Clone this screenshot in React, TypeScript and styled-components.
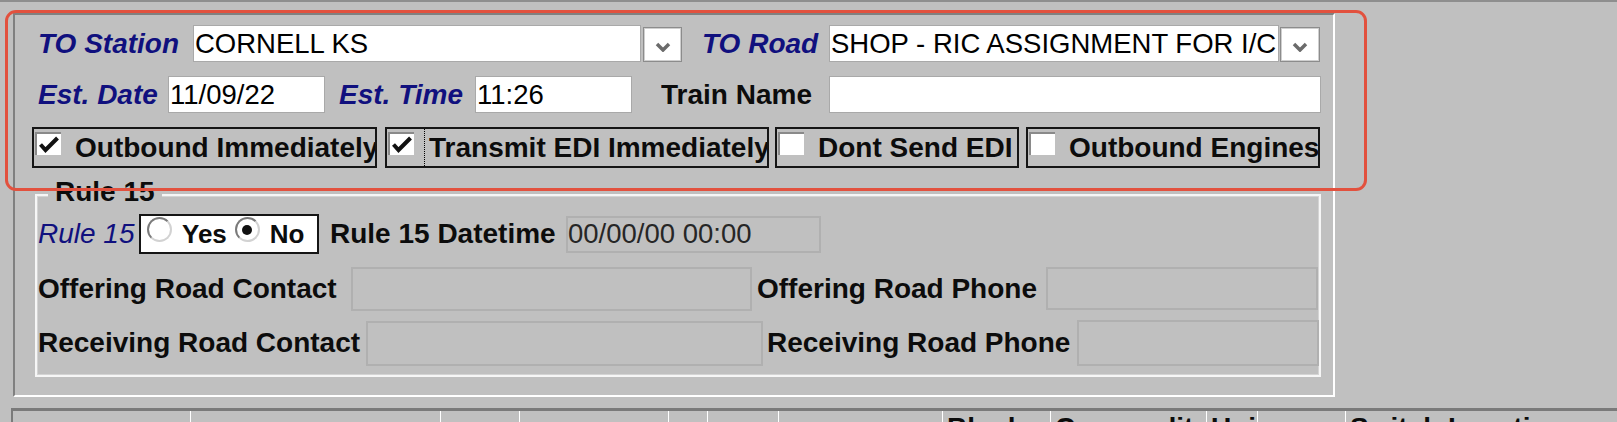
import React from 'react'
import styled, { createGlobalStyle } from 'styled-components'

const GlobalStyle = createGlobalStyle`
	html, body {
		margin: 0;
		padding: 0;
		background: #c0c0c0;
	}

	body {
		font-family: 'Liberation Sans', Arial, sans-serif;
		color: #000;
	}
`

const Page = styled.div`
	position: relative;
	height: 422px;
	overflow: hidden;
	box-sizing: border-box;
	border-top: 2px solid #8e8e8e;
	background: #c0c0c0;
	display: flex;
	flex-direction: column;
	align-items: flex-start;
`

const Panel = styled.div`
	margin: 11px 0 0 13px;
	width: 1322px;
	height: 384px;
	box-sizing: border-box;
	border: 2px solid;
	border-color: #808080 #ffffff #ffffff #808080;
	padding-top: 10px;
	display: flex;
	flex-direction: column;
	flex-shrink: 0;
`

const Row = styled.div<{ $h: number; $mt?: number; $pl?: number }>`
	display: flex;
	align-items: center;
	height: ${({ $h }) => $h}px;
	margin-top: ${({ $mt }) => $mt ?? 0}px;
	padding-left: ${({ $pl }) => $pl ?? 0}px;
	flex-shrink: 0;
`

const Label = styled.span<{ $w?: number; $ml?: number; $italic?: boolean; $plain?: boolean }>`
	flex-shrink: 0;
	width: ${({ $w }) => ($w ? `${$w}px` : 'auto')};
	margin-left: ${({ $ml }) => $ml ?? 0}px;
	font-size: 28px;
	font-weight: ${({ $plain }) => ($plain ? 'normal' : 'bold')};
	font-style: ${({ $italic }) => ($italic ? 'italic' : 'normal')};
	color: ${({ $italic }) => ($italic ? '#10107e' : '#0c0c0c')};
	white-space: nowrap;
	overflow: hidden;
`

const TextInput = styled.input<{ $w: number; $h?: number; $ml?: number }>`
	flex-shrink: 0;
	width: ${({ $w }) => $w}px;
	height: ${({ $h }) => $h ?? 37}px;
	margin: 0 0 0 ${({ $ml }) => $ml ?? 0}px;
	box-sizing: border-box;
	border: 1px solid #a9a9a9;
	padding: 0 0 0 1px;
	background: #ffffff;
	font-family: inherit;
	font-size: 27.5px;
	color: #000;
	outline: none;

	&:disabled {
		background: #c0c0c0;
		border: 2px solid #b0b0b0;
		color: #262626;
		padding-left: 0;
	}
`

const DropButton = styled.span<{ $w: number; $ml: number }>`
	flex-shrink: 0;
	width: ${({ $w }) => $w}px;
	height: 35px;
	margin-left: ${({ $ml }) => $ml}px;
	margin-top: 2px;
	box-sizing: border-box;
	border: 1px solid #8c8c8c;
	box-shadow: inset 0 0 0 1px #cfcfcf;
	background: #ffffff;
	display: flex;
	align-items: center;
	justify-content: center;

	svg {
		margin-top: 4px;
	}
`

const CheckGroup = styled.div<{ $w: number; $ml?: number }>`
	flex-shrink: 0;
	width: ${({ $w }) => $w}px;
	height: 41px;
	margin-left: ${({ $ml }) => $ml ?? 0}px;
	box-sizing: border-box;
	border: 2px solid #151515;
	display: flex;
	align-items: center;
	overflow: hidden;
`

const CheckBox = styled.span`
	flex-shrink: 0;
	align-self: flex-start;
	width: 26px;
	height: 23px;
	margin: 3px 0 0 1px;
	box-sizing: border-box;
	background: #ffffff;
	border-top: 2px solid #8a8a8a;
	border-left: 2px solid #8a8a8a;
	display: flex;
	align-items: center;
	justify-content: center;
`

const CheckText = styled.span<{ $focused?: boolean }>`
	flex-shrink: 0;
	margin-left: 14px;
	font-size: 28px;
	font-weight: bold;
	color: #0c0c0c;
	white-space: nowrap;

	${({ $focused }) =>
		$focused &&
		`
		flex: 1;
		align-self: stretch;
		display: flex;
		align-items: center;
		margin: -2px -2px -2px 10px;
		padding-left: 4px;
		border: 1px dotted #000;
		background: #c0c0c0;
		overflow: hidden;
	`}
`

const Fieldset = styled.fieldset`
	flex-shrink: 0;
	margin: 8px 0 0 20px;
	width: 1286px;
	box-sizing: border-box;
	border: 2px solid #f6f6f6;
	box-shadow: inset 1px 1px 0 #d4d4d4, inset -1px -1px 0 #d4d4d4;
	padding: 0 0 9px 1px;
	display: flex;
	flex-direction: column;
`

const Legend = styled.legend`
	margin-left: 10px;
	padding: 0 7px 6px;
	line-height: 32px;
	font-size: 28px;
	font-weight: bold;
	color: #0c0c0c;
	background: #c0c0c0;
`

const RadioBox = styled.div`
	flex-shrink: 0;
	width: 180px;
	height: 40px;
	box-sizing: border-box;
	border: 2px solid #151515;
	background: #ffffff;
	display: flex;
	align-items: center;
	padding-left: 6px;
`

const Radio = styled.span<{ $checked?: boolean }>`
	flex-shrink: 0;
	align-self: flex-start;
	width: 25px;
	height: 25px;
	margin-top: 1px;
	box-sizing: border-box;
	border-radius: 50%;
	border: 2px solid;
	border-color: #7a7a7a #d2d2d2 #d2d2d2 #7a7a7a;
	background: #ffffff;
	display: flex;
	align-items: center;
	justify-content: center;

	&::after {
		content: '';
		display: ${({ $checked }) => ($checked ? 'block' : 'none')};
		width: 10px;
		height: 10px;
		border-radius: 50%;
		background: #111;
	}
`

const RadioText = styled.span<{ $mr?: number }>`
	margin: 0 ${({ $mr }) => $mr ?? 0}px 0 10px;
	font-size: 26px;
	font-weight: bold;
	color: #0c0c0c;
`

const GridHead = styled.div`
	flex-shrink: 0;
	margin: 11px 0 0 11px;
	width: calc(100% - 11px);
	height: 40px;
	box-sizing: border-box;
	border-top: 3px solid #7a7a7a;
	border-left: 2px solid #7a7a7a;
	display: flex;
`

const HeadCell = styled.div<{ $w?: number; $first?: boolean }>`
	flex: ${({ $w }) => ($w ? `0 0 ${$w}px` : '1')};
	box-sizing: border-box;
	border-left: ${({ $first }) => ($first ? 'none' : '1px solid #ffffff')};
	padding: 1px 0 0 4px;
	font-size: 28px;
	font-weight: bold;
	color: #0c0c0c;
	white-space: nowrap;
	overflow: hidden;
`

const Highlight = styled.div`
	position: absolute;
	left: 5px;
	top: 8px;
	width: 1362px;
	height: 181px;
	box-sizing: border-box;
	border: 3.5px solid #e2513e;
	border-radius: 11px;
	pointer-events: none;
`

const Chevron = () => (
	<svg width="16" height="10" viewBox="0 0 16 10">
		<polyline points="2,2 8,8 14,2" fill="none" stroke="#6b6b6b" strokeWidth="3.5" />
	</svg>
)

const Check = () => (
	<svg width="22" height="19" viewBox="0 0 22 19">
		<path d="M2.5 9.5 L7.5 15 L19.5 3" fill="none" stroke="#111" strokeWidth="4" />
	</svg>
)

const headCells: { w?: number; text?: string }[] = [
	{ w: 177 },
	{ w: 250 },
	{ w: 79 },
	{ w: 149 },
	{ w: 39 },
	{ w: 71 },
	{ w: 164 },
	{ w: 108, text: 'Block' },
	{ w: 156, text: 'Commodity' },
	{ w: 51, text: 'Unit' },
	{ w: 88 },
	{ text: 'Switch Location' },
]

const App = () => {
	return (
		<>
			<GlobalStyle />
			<Page>
				<Panel>
					<Row $h={37} $pl={23}>
						<Label $italic $w={155}>
							TO Station
						</Label>
						<TextInput $w={448} value="CORNELL KS" readOnly />
						<DropButton $w={39} $ml={2}>
							<Chevron />
						</DropButton>
						<Label $italic $w={127} $ml={20}>
							TO Road
						</Label>
						<TextInput $w={450} value="SHOP - RIC ASSIGNMENT FOR I/C" readOnly />
						<DropButton $w={40} $ml={1}>
							<Chevron />
						</DropButton>
					</Row>
					<Row $h={37} $mt={14} $pl={23}>
						<Label $italic $w={130}>
							Est. Date
						</Label>
						<TextInput $w={157} value="11/09/22" readOnly />
						<Label $italic $w={136} $ml={14}>
							Est. Time
						</Label>
						<TextInput $w={157} value="11:26" readOnly />
						<Label $w={168} $ml={29}>
							Train Name
						</Label>
						<TextInput $w={492} value="" readOnly />
					</Row>
					<Row $h={41} $mt={14} $pl={17}>
						<CheckGroup $w={345}>
							<CheckBox>
								<Check />
							</CheckBox>
							<CheckText>Outbound Immediately</CheckText>
						</CheckGroup>
						<CheckGroup $w={384} $ml={8}>
							<CheckBox>
								<Check />
							</CheckBox>
							<CheckText $focused>Transmit EDI Immediately</CheckText>
						</CheckGroup>
						<CheckGroup $w={244} $ml={6}>
							<CheckBox />
							<CheckText>Dont Send EDI</CheckText>
						</CheckGroup>
						<CheckGroup $w={294} $ml={7}>
							<CheckBox />
							<CheckText>Outbound Engines</CheckText>
						</CheckGroup>
					</Row>
					<Fieldset>
						<Legend>Rule 15</Legend>
						<Row $h={40}>
							<Label $italic $plain $w={101}>
								Rule 15
							</Label>
							<RadioBox>
								<Radio />
								<RadioText $mr={8}>Yes</RadioText>
								<Radio $checked />
								<RadioText>No</RadioText>
							</RadioBox>
							<Label $w={236} $ml={11}>
								Rule 15 Datetime
							</Label>
							<TextInput $w={255} value="00/00/00 00:00" disabled />
						</Row>
						<Row $h={47} $mt={11}>
							<Label $w={313}>Offering Road Contact</Label>
							<TextInput $w={401} $h={44} value="" disabled />
							<Label $w={289} $ml={5}>
								Offering Road Phone
							</Label>
							<TextInput $w={272} $h={43} value="" disabled />
						</Row>
						<Row $h={46} $mt={8}>
							<Label $w={328}>Receiving Road Contact</Label>
							<TextInput $w={397} $h={45} value="" disabled />
							<Label $w={310} $ml={4}>
								Receiving Road Phone
							</Label>
							<TextInput $w={242} $h={46} value="" disabled />
						</Row>
					</Fieldset>
				</Panel>
				<GridHead>
					{headCells.map((cell, index) => (
						<HeadCell key={index} $w={cell.w} $first={index === 0}>
							{cell.text}
						</HeadCell>
					))}
				</GridHead>
				<Highlight />
			</Page>
		</>
	)
}

export default App
